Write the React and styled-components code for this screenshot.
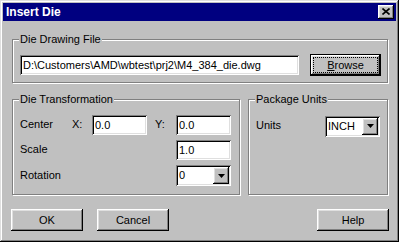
import React from 'react';
import styled, { createGlobalStyle, css } from 'styled-components';

const GlobalStyle = createGlobalStyle`
  html, body {
    margin: 0;
    padding: 0;
    background: #fff;
  }
  body {
    font-family: "Liberation Sans", Arial, sans-serif;
    font-size: 11px;
    color: #000;
  }
`;

const raised = css`
  box-shadow: inset -1px -1px #000, inset 1px 1px #fff, inset -2px -2px #808080, inset 2px 2px #dfdfdf;
`;

const sunken = css`
  box-shadow: inset 1px 1px #808080, inset -1px -1px #fff, inset 2px 2px #000, inset -2px -2px #dfdfdf;
`;

function ArrowDown() {
  return (
    <svg width="7" height="4" viewBox="0 0 7 4">
      <polygon points="0,0 7,0 3.5,4" fill="#000" />
    </svg>
  );
}

function CloseGlyph() {
  return (
    <svg width="8" height="7" viewBox="0 0 8 7">
      <path d="M0.5 0.5 L7.5 6.5 M7.5 0.5 L0.5 6.5" stroke="#000" strokeWidth="1.6" />
    </svg>
  );
}

function Combo({ value }) {
  return (
    <Select>
      <SelectValue>{value}</SelectValue>
      <DropButton><ArrowDown /></DropButton>
    </Select>
  );
}

function App() {
  return (
    <>
      <GlobalStyle />
      <Window>
        <TitleBar>
          <span>Insert Die</span>
          <CloseButton><CloseGlyph /></CloseButton>
        </TitleBar>

        <FileGroup>
          <Caption>Die Drawing File</Caption>
          <FileRow>
            <TextField $w={279} readOnly value="D:\Customers\AMD\wbtest\prj2\M4_384_die.dwg" />
            <DefaultButton>
              <Focus><u>B</u>rowse</Focus>
            </DefaultButton>
          </FileRow>
        </FileGroup>

        <GroupRow>
          <TransformGroup>
            <Caption>Die Transformation</Caption>
            <TransformGrid>
              <Label>Center</Label>
              <Label>X:</Label>
              <TextField $w={55} readOnly value="0.0" />
              <Label $indent={8}>Y:</Label>
              <TextField $w={55} readOnly value="0.0" />

              <Label>Scale</Label>
              <TextField $w={55} $col={5} readOnly value="1.0" />

              <Label>Rotation</Label>
              <Cell $col={5}><Combo value="0" /></Cell>
            </TransformGrid>
          </TransformGroup>

          <UnitsGroup>
            <Caption>Package Units</Caption>
            <UnitsRow>
              <Label>Units</Label>
              <Combo value="INCH" />
            </UnitsRow>
          </UnitsGroup>
        </GroupRow>

        <ButtonRow>
          <Button>OK</Button>
          <Button>Cancel</Button>
          <Button $push>Help</Button>
        </ButtonRow>
      </Window>
    </>
  );
}

export default App;

const Window = styled.div`
  width: 399px;
  height: 242px;
  box-sizing: border-box;
  padding: 3px;
  background: #c0c0c0;
  box-shadow: inset -1px -1px #000, inset 1px 1px #dfdfdf, inset -2px -2px #808080, inset 2px 2px #fff;
  display: flex;
  flex-direction: column;
`;

const TitleBar = styled.div`
  height: 18px;
  flex: none;
  background: #000080;
  color: #fff;
  display: flex;
  align-items: center;
  justify-content: space-between;
  padding: 0 2px 0 3px;
  font-weight: bold;
  font-size: 12px;
`;

const CloseButton = styled.span`
  width: 16px;
  height: 14px;
  box-sizing: border-box;
  background: #c0c0c0;
  ${raised};
  display: flex;
  align-items: center;
  justify-content: center;
  padding: 0 1px 1px 0;
`;

const Group = styled.div`
  border: 1px solid #808080;
  box-shadow: inset 1px 1px #fff, 1px 1px #fff;
  display: flex;
  flex-direction: column;
  padding-left: 7px;
`;

const FileGroup = styled(Group)`
  margin: 18px 8px 0 9px;
  padding-right: 6px;
  padding-bottom: 6px;
`;

const Caption = styled.span`
  align-self: flex-start;
  margin: -7px 0 0 -1px;
  padding: 0 1px;
  line-height: 13px;
  background: #c0c0c0;
`;

const FileRow = styled.div`
  display: flex;
  align-items: center;
  justify-content: space-between;
  margin-top: 8px;
  height: 22px;
`;

const TextField = styled.input`
  width: ${p => p.$w}px;
  height: 20px;
  box-sizing: border-box;
  border: none;
  outline: none;
  margin: 0;
  padding: 0 3px;
  background: #fff;
  font: inherit;
  color: #000;
  ${sunken};
  grid-column: ${p => p.$col || 'auto'};
`;

const Button = styled.button`
  width: 72px;
  height: 22px;
  box-sizing: border-box;
  border: none;
  padding: 0;
  margin: 0;
  margin-left: ${p => (p.$push ? 'auto' : '0')};
  background: #c0c0c0;
  font: inherit;
  color: #000;
  ${raised};
`;

const DefaultButton = styled(Button)`
  width: 71px;
  border: 1px solid #000;
  padding: 2px;
  display: flex;
`;

const Focus = styled.span`
  flex: 1;
  border: 1px dotted #000;
  display: flex;
  align-items: center;
  justify-content: center;
`;

const GroupRow = styled.div`
  display: flex;
  gap: 8px;
  margin: 16px 8px 0 9px;
`;

const TransformGroup = styled(Group)`
  width: 228px;
  box-sizing: border-box;
  padding-right: 8px;
  padding-bottom: 8px;
`;

const UnitsGroup = styled(Group)`
  flex: 1;
  padding-right: 7px;
`;

const TransformGrid = styled.div`
  display: grid;
  grid-template-columns: 52px 20px 55px 29px 55px;
  grid-template-rows: 20px 20px 21px;
  row-gap: 5px;
  margin-top: 9px;
  align-items: center;
`;

const Label = styled.span`
  padding-left: ${p => p.$indent || 0}px;
  padding-bottom: 2px;
  line-height: 20px;
`;

const Cell = styled.div`
  grid-column: ${p => p.$col};
`;

const UnitsRow = styled.div`
  display: flex;
  align-items: center;
  justify-content: space-between;
  margin-top: 9px;
`;

const Select = styled.div`
  width: 55px;
  height: 21px;
  box-sizing: border-box;
  padding: 2px;
  background: #fff;
  ${sunken};
  display: flex;
`;

const SelectValue = styled.span`
  flex: 1;
  padding-left: 1px;
  line-height: 17px;
`;

const DropButton = styled.span`
  width: 16px;
  background: #c0c0c0;
  ${raised};
  display: flex;
  align-items: center;
  justify-content: center;
`;

const ButtonRow = styled.div`
  display: flex;
  gap: 14px;
  margin: 14px 7px 0 8px;
`;
